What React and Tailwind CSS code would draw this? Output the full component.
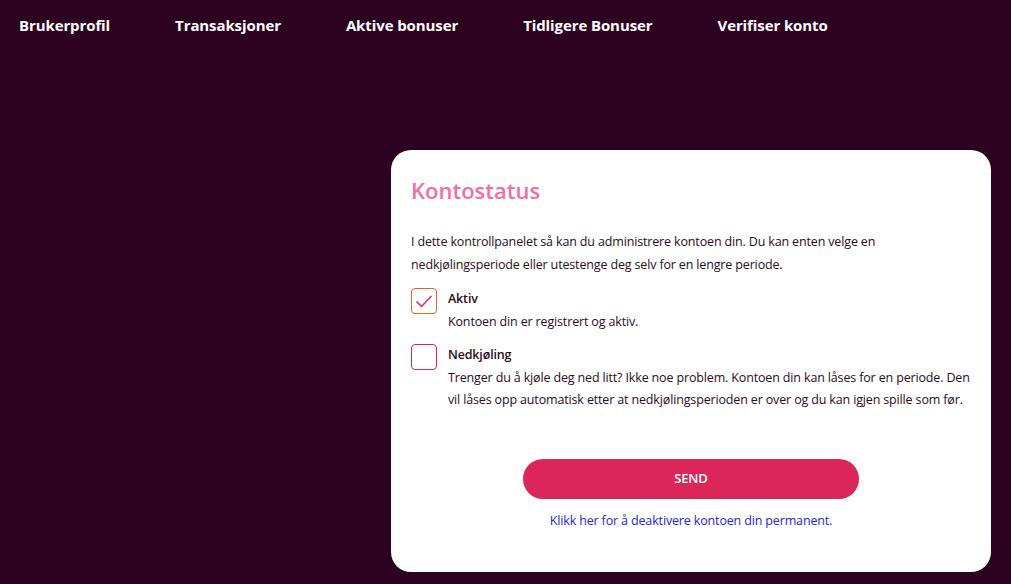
export default function App() {
  const nav = ["Brukerprofil", "Transaksjoner", "Aktive bonuser", "Tidligere Bonuser", "Verifiser konto"];
  return (
    <div className="min-h-[584px] w-full bg-[#2d0220] text-[#2b0b22]" style={{ fontFamily: '"Open Sans", "Noto Sans", sans-serif' }}>
      <nav className="flex gap-[65px] pl-[19px] pt-[14px] h-[150px]">
        {nav.map((n) => (
          <span key={n} className="text-white font-bold text-[15px] leading-[22px] tracking-[-0.1px]">{n}</span>
        ))}
      </nav>
      <div className="flex">
        <div className="w-[391px] shrink-0" />
        <div className="w-[600px] h-[422px] bg-white rounded-[20px] px-[20px] pt-[26px] tracking-[-0.15px]">
          <h1 className="text-[#f36da6] text-[22px] leading-[28px] font-semibold tracking-normal">Kontostatus</h1>
          <p className="mt-[26px] text-[12.5px] leading-[23px] pr-[60px]">
            I dette kontrollpanelet så kan du administrere kontoen din. Du kan enten velge en nedkjølingsperiode eller utestenge deg selv for en lengre periode.
          </p>
          <div className="mt-[12px] flex gap-[11px]">
            <div className="w-[26px] h-[26px] shrink-0 rounded-[4px] border border-[#e8652a] flex items-center justify-center">
              <svg width="18" height="15" viewBox="0 0 18 15" fill="none">
                <path d="M2 8 L6.5 12.5 L16 2.5" stroke="#e0306a" strokeWidth="1.7" strokeLinecap="round" strokeLinejoin="round" />
              </svg>
            </div>
            <div>
              <div className="text-[12.5px] font-semibold leading-[22px]">Aktiv</div>
              <div className="text-[12.5px] leading-[23px]">Kontoen din er registrert og aktiv.</div>
            </div>
          </div>
          <div className="mt-[11px] flex gap-[11px]">
            <div className="w-[26px] h-[26px] shrink-0 rounded-[4px] border border-[#d6245e]" />
            <div>
              <div className="text-[12.5px] font-semibold leading-[22px]">Nedkjøling</div>
              <div className="text-[12.5px] leading-[22px] mt-[1px]">
                Trenger du å kjøle deg ned litt? Ikke noe problem. Kontoen din kan låses for en periode. Den vil låses opp automatisk etter at nedkjølingsperioden er over og du kan igjen spille som før.
              </div>
            </div>
          </div>
          <div className="flex flex-col items-center mt-[48px]">
            <button className="w-[336px] h-[40px] rounded-full bg-[#dc2559] text-white text-[13px] font-semibold">SEND</button>
            <a className="mt-[12px] text-[#2323e6] text-[12.5px] leading-[20px]">Klikk her for å deaktivere kontoen din permanent.</a>
          </div>
        </div>
      </div>
    </div>
  );
}
